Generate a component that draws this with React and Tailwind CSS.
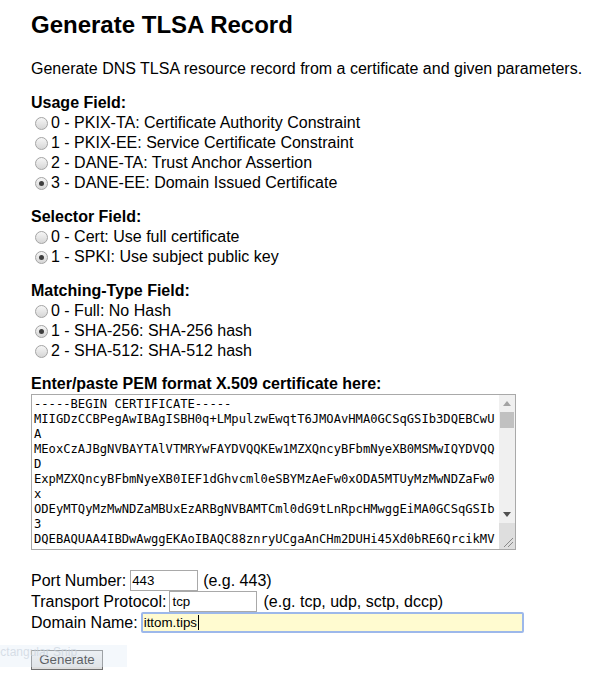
import React from "react";

const pemLines = [
  "-----BEGIN CERTIFICATE-----",
  "MIIGDzCCBPegAwIBAgISBH0q+LMpulzwEwqtT6JMOAvHMA0GCSqGSIb3DQEBCwU",
  "A",
  "MEoxCzAJBgNVBAYTAlVTMRYwFAYDVQQKEw1MZXQncyBFbmNyeXB0MSMwIQYDVQQ",
  "D",
  "ExpMZXQncyBFbmNyeXB0IEF1dGhvcml0eSBYMzAeFw0xODA5MTUyMzMwNDZaFw0",
  "x",
  "ODEyMTQyMzMwNDZaMBUxEzARBgNVBAMTCml0dG9tLnRpcHMwggEiMA0GCSqGSIb",
  "3",
  "DQEBAQUAA4IBDwAwggEKAoIBAQC88znryUCgaAnCHm2DUHi45Xd0bRE6QrcikMV",
];

function Radio({ checked, children }) {
  return (
    <div className="flex h-[20px] items-center">
      <span className="ml-[4px] mr-[3px] flex h-[13px] w-[13px] items-center justify-center rounded-full border border-[#a4a4a4] bg-linear-to-b from-[#f6f6f6] to-[#d6d6d6]">
        {checked && <span className="h-[5px] w-[5px] rounded-full bg-[#3f3f3f]" />}
      </span>
      <span>{children}</span>
    </div>
  );
}

function FieldTitle({ className, children }) {
  return <div className={`font-bold leading-[20px] ${className}`}>{children}</div>;
}

function PemBox() {
  return (
    <div className="flex h-[156px] w-[485px] border border-[#a9a9a9] bg-white">
      <div className="flex-1 overflow-hidden whitespace-pre pl-[2px] pt-[2px] font-['DejaVu_Sans_Mono',monospace] text-[12.15px] leading-[15px] text-black">
        {pemLines.join("\n")}
      </div>
      {/* scrollbar */}
      <div className="flex w-[16px] flex-col bg-[#f0f0f0]">
        <div className="flex h-[17px] items-center justify-center">
          <svg width="8" height="5" viewBox="0 0 8 5">
            <path d="M0 5 L4 0 L8 5 Z" fill="#a3a3a3" />
          </svg>
        </div>
        <div className="mx-[1px] h-[16px] bg-[#c1c1c1]" />
        <div className="flex-1" />
        <div className="flex h-[17px] items-center justify-center">
          <svg width="8" height="5" viewBox="0 0 8 5">
            <path d="M0 0 L8 0 L4 5 Z" fill="#505050" />
          </svg>
        </div>
        <div className="flex h-[26px] items-end justify-end bg-[#dedede] p-[2px]">
          <svg width="10" height="10" viewBox="0 0 10 10">
            <path d="M1 10 L10 1 M5 10 L10 5" stroke="#8a8a8a" strokeWidth="1" />
          </svg>
        </div>
      </div>
    </div>
  );
}

export default function App() {
  return (
    <div className="relative min-h-[681px] bg-white pl-[31px] pt-[11px] font-['Liberation_Sans',Arial,sans-serif] text-[16px] text-black">
      <h1 className="text-[24px] font-bold leading-[28px]">Generate TLSA Record</h1>

      <p className="mt-[20px] leading-[20px]">
        Generate DNS TLSA resource record from a certificate and given parameters.
      </p>

      <FieldTitle className="mt-[14px]">Usage Field:</FieldTitle>
      <Radio>0 - PKIX-TA: Certificate Authority Constraint</Radio>
      <Radio>1 - PKIX-EE: Service Certificate Constraint</Radio>
      <Radio>2 - DANE-TA: Trust Anchor Assertion</Radio>
      <Radio checked>3 - DANE-EE: Domain Issued Certificate</Radio>

      <FieldTitle className="mt-[14px]">Selector Field:</FieldTitle>
      <Radio>0 - Cert: Use full certificate</Radio>
      <Radio checked>1 - SPKI: Use subject public key</Radio>

      <FieldTitle className="mt-[14px]">Matching-Type Field:</FieldTitle>
      <Radio>0 - Full: No Hash</Radio>
      <Radio checked>1 - SHA-256: SHA-256 hash</Radio>
      <Radio>2 - SHA-512: SHA-512 hash</Radio>

      <FieldTitle className="mt-[13px]">Enter/paste PEM format X.509 certificate here:</FieldTitle>
      <PemBox />

      <div className="mt-[20px]">
        <div className="flex h-[21px] items-center">
          <span>Port Number:</span>
          <div className="ml-[4px] mr-[5px] flex h-[21px] w-[68px] items-center border border-[#a9a9a9] bg-white pl-[1px] text-[13.33px]">
            443
          </div>
          <span>(e.g. 443)</span>
        </div>
        <div className="flex h-[21px] items-center">
          <span>Transport Protocol:</span>
          <div className="ml-[3px] mr-[6px] flex h-[21px] w-[88px] items-center border border-[#a9a9a9] bg-white pl-[2px] text-[13.33px]">
            tcp
          </div>
          <span>(e.g. tcp, udp, sctp, dccp)</span>
        </div>
        <div className="flex h-[21px] items-center">
          <span>Domain Name:</span>
          <div className="ml-[3px] flex h-[21px] w-[383px] items-center rounded-[2px] border-2 border-[#9db8ea] bg-[#fffbd0] pl-[1px] text-[13.33px]">
            ittom.tips
            <span className="ml-[1px] h-[15px] w-px bg-black" />
          </div>
        </div>
      </div>

      <button className="mt-[17px] flex h-[20px] w-[72px] items-center justify-center border border-[#707070] bg-linear-to-b from-[#f2f2f2] to-[#dcdcdc] text-[13.33px] leading-[16px] text-black">
        Generate
      </button>

      {/* faint snipping-tool label lying over the button */}
      <div className="pointer-events-none absolute left-0 top-[645px] h-[22px] w-[127px] overflow-hidden bg-[#e4eef8]/40">
        <span className="ml-[-15px] block whitespace-nowrap text-[12px] leading-[14px] text-[#c9d2dc]/70">
          Rectangular Snip
        </span>
      </div>
    </div>
  );
}
